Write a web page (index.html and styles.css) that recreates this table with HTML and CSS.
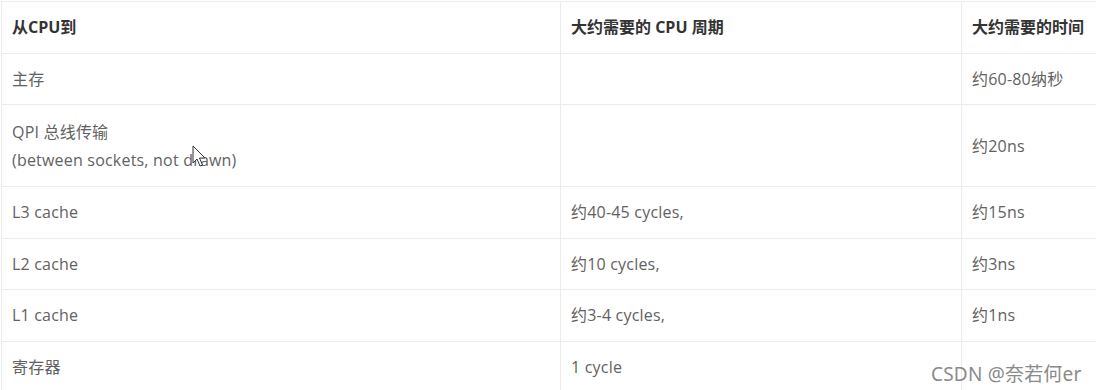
FILE: index.html
```html
<!DOCTYPE html>
<html>
<head>
<meta charset="utf-8">
<link rel="stylesheet" href="styles.css">
</head>
<body>
<div class="page">
  <table class="tbl">
    <colgroup><col class="c1"><col class="c2"><col class="c3"></colgroup>
    <thead>
      <tr><th>从CPU到</th><th>大约需要的 CPU 周期</th><th>大约需要的时间</th></tr>
    </thead>
    <tbody>
      <tr><td>主存</td><td></td><td>约60-80纳秒</td></tr>
      <tr class="tall"><td>QPI 总线传输<br>(between sockets, not drawn)</td><td></td><td>约20ns</td></tr>
      <tr><td>L3 cache</td><td>约40-45 cycles,</td><td>约15ns</td></tr>
      <tr><td>L2 cache</td><td>约10 cycles,</td><td>约3ns</td></tr>
      <tr><td>L1 cache</td><td>约3-4 cycles,</td><td>约1ns</td></tr>
      <tr><td>寄存器</td><td>1 cycle</td><td></td></tr>
    </tbody>
  </table>
  <svg class="cursor" width="16" height="24" viewBox="0 0 16 24">
    <path d="M1 1 L1 18 L5 14 L8 21 L10.5 20 L7.5 13 L13 13 Z" fill="#fff" stroke="#333" stroke-width="1" stroke-linejoin="round"/>
  </svg>
  <div class="mark">CSDN @奈若何er</div>
</div>
</body>
</html>
```
FILE: styles.css
```css
html, body {
  margin: 0;
  padding: 0;
  background: #fff;
  overflow: hidden;
}
.page {
  position: relative;
  width: 1096px;
  height: 390px;
  overflow: hidden;
  padding: 1px 0 0 1px;
  box-sizing: border-box;
  font-family: "Open Sans", "Noto Sans CJK SC", sans-serif;
}
.tbl {
  border-collapse: collapse;
  table-layout: fixed;
  width: 1120px;
}
.c1 { width: 559px; }
.c2 { width: 401px; }
.c3 { width: 160px; }
.tbl th, .tbl td {
  border: 1px solid #ececec;
  padding: 0 10px;
  height: 50.5px;
  text-align: left;
  font-size: 16px;
  line-height: 28px;
  vertical-align: middle;
  white-space: nowrap;
}
.tbl th {
  color: #333;
  font-weight: 700;
  letter-spacing: 0;
}
.tbl td {
  color: #626262;
  letter-spacing: 0.2px;
}
.tbl tr.tall td {
  height: 81px;
}
.cursor {
  position: absolute;
  left: 192px;
  top: 145px;
}
.mark {
  position: absolute;
  left: 931px;
  top: 359px;
  font-family: "Noto Sans", "Noto Sans CJK SC", sans-serif;
  font-size: 19px;
  color: #8a8a8a;
  letter-spacing: 0.2px;
}
```
